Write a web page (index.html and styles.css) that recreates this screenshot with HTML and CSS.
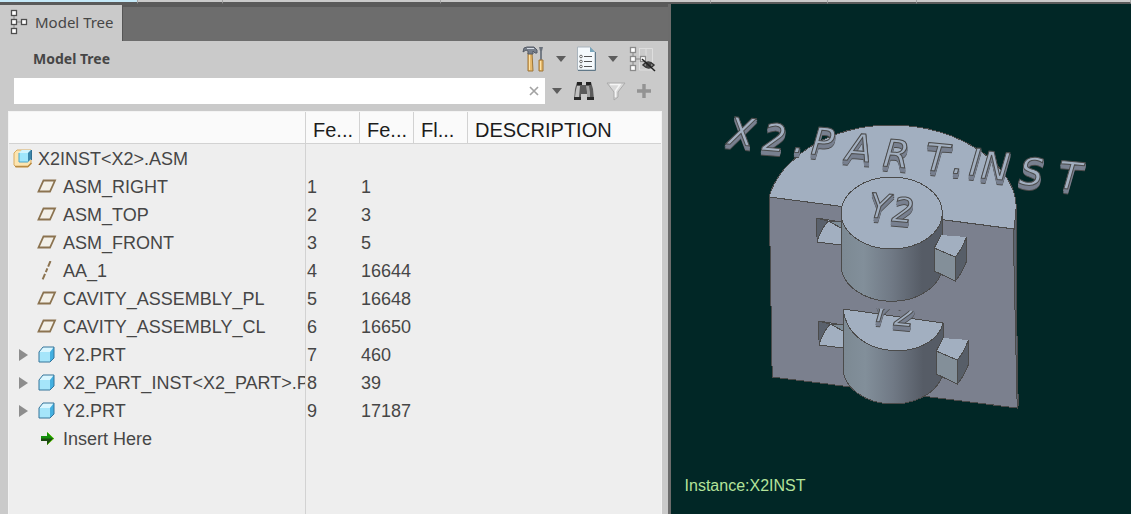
FILE: index.html
```
<!DOCTYPE html>
<html lang="en">
<head>
    <meta charset="UTF-8">
    <meta name="viewport" content="width=device-width, initial-scale=1.0">
    <title>Model Tree</title>
    <link rel="stylesheet" href="styles.css">
</head>
<body>
    <!-- shared icons -->
    <svg class="icon-defs" aria-hidden="true">
        <symbol id="plane" viewBox="0 0 20 20">
            <path d="M6.5 3.500H18L13 14.500H1.500Z" fill="#f3f0e8" stroke="#8b7350" stroke-width="1.800"/>
        </symbol>
        <symbol id="axis" viewBox="0 0 20 20">
            <path d="M13.500 0L5 20" fill="none" stroke="#8b7350" stroke-width="2" stroke-dasharray="6 2 4 2"/>
        </symbol>
        <symbol id="part" viewBox="0 0 20 20">
            <path d="M2 7L6 2H17V13L13 17H2Z" fill="#a5e5fa"/>
            <path d="M2 7L6 2H17L13 7Z" fill="#d9f6ff"/>
            <path d="M13 7L17 2V13L13 17Z" fill="#43afe0"/>
            <path d="M2 7L6 2H17V13L13 17H2Z" fill="none" stroke="#35749a"/>
        </symbol>
        <symbol id="asm" viewBox="0 0 20 20">
            <path d="M1 4L4 1H18V14L15 18H3L1 16Z" fill="#fde5b0" stroke="#d9ac61"/>
            <path d="M2 17.500H15L18.500 14" fill="none" stroke="#b98b43" stroke-width="1.500"/>
            <path d="M6 4L9 1H18V10L15 13H6Z" fill="#9fe6fb"/>
            <path d="M6 4L9 1H18L15 4Z" fill="#d2f4fd"/>
            <path d="M15 4L18 1V10L15 13Z" fill="#3b86aa"/>
            <path d="M6 4V13H15" fill="none" stroke="#4ba5c9"/>
            <path d="M18.500 1V11" stroke="#2f6f92"/>
        </symbol>
        <symbol id="insert" viewBox="0 0 20 20">
            <path d="M4 7H10V3L17 9.500L10 16V12H4Z" fill="#14900c"/>
            <path d="M4 9.500H17L10 16V12H4Z" fill="#1c4b12"/>
            <path d="M10.500 3.500L16.500 9.500L10.500 15.500" fill="none" stroke="#5cc40a"/>
        </symbol>
    </svg>

    <div class="ribbon">
        <span class="active"></span><span></span><span></span><span></span><span></span><span></span><span></span>
    </div>

    <div class="workspace">
        <div class="panel">
            <div class="tabs">
                <button class="tab">
                    <svg width="18" height="26" viewBox="0 0 18 26">
                        <path d="M4 4V22M4 13H13" stroke="#8a8a8a" stroke-width="1"/>
                        <g fill="#fff" stroke="#4d4d4d" stroke-width="1.300">
                            <rect x="1.500" y="1.500" width="5" height="5"/>
                            <rect x="1.500" y="10.500" width="5" height="5"/>
                            <rect x="1.500" y="19.500" width="5" height="5"/>
                            <rect x="11.500" y="10.500" width="5" height="5"/>
                        </g>
                    </svg>
                    Model Tree
                </button>
            </div>

            <div class="toolbar">
                <h1>Model Tree</h1>
                <div class="tools">
                    <button class="tool" aria-label="Settings">
                        <svg width="24" height="28" viewBox="0 0 24 28">
                            <path d="M6 8H10L11 26H6Z" fill="#e6b96c" stroke="#9f7535"/>
                            <path d="M7.500 9V25" stroke="#ffe2a5"/>
                            <path d="M2 3L5 2H12L15 5V8H13L11 6V9H6V6L4 5L1 7Z" fill="#777f8b" stroke="#555b66"/>
                            <path d="M5 3.500H12" stroke="#d7dde6"/>
                            <path d="M19 2V15" stroke="#747b84" stroke-width="2"/>
                            <path d="M17 2H21L20 6H18Z" fill="#6b727c"/>
                            <path d="M17 15H21V26H17Z" fill="#e6b96c" stroke="#9f7535"/>
                            <path d="M18.500 16V25" stroke="#ffe2a5"/>
                        </svg>
                    </button>
                    <button class="tool" aria-label="Settings menu"><svg class="caret" width="10" height="6" viewBox="0 0 10 6"><path d="M0 0H10L5 6Z"/></svg></button>
                    <button class="tool" aria-label="Show">
                        <svg width="22" height="28" viewBox="0 0 22 28">
                            <path d="M1.500 2H14L19 7V25H1.500Z" fill="#f4f9fc" stroke="#a9b4bd"/>
                            <path d="M2 25.500H19.500V7" fill="none" stroke="#607888"/>
                            <path d="M14 2V7H19Z" fill="#79a6bc"/>
                            <path d="M8 11.500H16M8 16.500H16M8 21.500H16" stroke="#555"/>
                            <g fill="#fff" stroke="#666"><circle cx="5" cy="11.500" r="1.300"/><circle cx="5" cy="16.500" r="1.300"/><circle cx="5" cy="21.500" r="1.300"/></g>
                        </svg>
                    </button>
                    <button class="tool" aria-label="Show menu"><svg class="caret" width="10" height="6" viewBox="0 0 10 6"><path d="M0 0H10L5 6Z"/></svg></button>
                    <button class="tool" aria-label="Hide columns">
                        <svg width="28" height="28" viewBox="0 0 28 28">
                            <path d="M11 3.500H24.500V25M11.500 3V25H24M18 3V24" fill="none" stroke="#dedede"/>
                            <path d="M5 5V23M5 14H14" stroke="#888"/>
                            <g fill="#fff" stroke="#8a8a8a" stroke-width="1.300">
                                <rect x="2.500" y="2.500" width="5" height="5"/>
                                <rect x="2.500" y="11.500" width="5" height="5"/>
                                <rect x="2.500" y="20.500" width="5" height="5"/>
                                <rect x="12.500" y="11.500" width="5" height="5"/>
                            </g>
                            <path d="M15 20Q20 14 26 20Q21 26 15 20Z" fill="#bbb" stroke="#333" stroke-width="1.500"/>
                            <circle cx="20.500" cy="20" r="3" fill="#444"/>
                            <path d="M14 14L27 26" stroke="#222" stroke-width="1.500"/>
                        </svg>
                    </button>
                </div>
            </div>

            <div class="search">
                <div class="field">
                    <input type="text" aria-label="Search the tree">
                    <button class="tool" aria-label="Clear">
                        <svg width="10" height="10" viewBox="0 0 10 10"><path d="M1 1L9 9M9 1L1 9" stroke="#a3a3a3" stroke-width="1.700"/></svg>
                    </button>
                </div>
                <div class="tools">
                    <button class="tool" aria-label="Search menu"><svg class="caret" width="10" height="6" viewBox="0 0 10 6"><path d="M0 0H10L5 6Z"/></svg></button>
                    <button class="tool" aria-label="Find">
                        <svg width="22" height="20" viewBox="0 0 22 20">
                            <path d="M4 1H9V4H13V1H18L20 8L21 19H14V13H8V19H1L2 8Z" fill="#5b5b5b"/>
                            <path d="M4 1H9V4H4ZM13 1H18V4H13Z" fill="#222"/>
                            <path d="M4 5H7L6 16H2L3 9Z" fill="#c0c0c0"/>
                            <path d="M13 5H16L17 11V16H14V11Z" fill="#a2a2a2"/>
                            <path d="M1 16H8V19H1ZM14 16H21V19H14Z" fill="#292929"/>
                        </svg>
                    </button>
                    <button class="tool" aria-label="Filter">
                        <svg width="20" height="20" viewBox="0 0 20 20">
                            <path d="M1 2H19L12 11V16L8 19V11Z" fill="#d9d9d9" stroke="#aaa"/>
                            <path d="M4 3.500H14L9.500 10V16" fill="none" stroke="#f5f5f5" stroke-width="1.500"/>
                        </svg>
                    </button>
                    <button class="tool" aria-label="Add">
                        <svg width="14" height="14" viewBox="0 0 14 14"><path d="M7 0V14M0 7H14" stroke="#939393" stroke-width="3.400"/></svg>
                    </button>
                </div>
            </div>

            <div class="tree">
                <table>
                    <thead>
                        <tr>
                            <th class="name" aria-label="Name"></th>
                            <th class="num">Fe...</th>
                            <th class="num">Fe...</th>
                            <th class="num">Fl...</th>
                            <th>DESCRIPTION</th>
                        </tr>
                    </thead>
                    <tbody>
                        <tr>
                            <td><div class="item root"><svg class="icon"><use href="#asm"/></svg>X2INST&lt;X2&gt;.ASM</div></td>
                            <td></td><td></td><td></td><td></td>
                        </tr>
                        <tr>
                            <td><div class="item"><svg class="icon"><use href="#plane"/></svg>ASM_RIGHT</div></td>
                            <td>1</td><td>1</td><td></td><td></td>
                        </tr>
                        <tr>
                            <td><div class="item"><svg class="icon"><use href="#plane"/></svg>ASM_TOP</div></td>
                            <td>2</td><td>3</td><td></td><td></td>
                        </tr>
                        <tr>
                            <td><div class="item"><svg class="icon"><use href="#plane"/></svg>ASM_FRONT</div></td>
                            <td>3</td><td>5</td><td></td><td></td>
                        </tr>
                        <tr>
                            <td><div class="item"><svg class="icon"><use href="#axis"/></svg>AA_1</div></td>
                            <td>4</td><td>16644</td><td></td><td></td>
                        </tr>
                        <tr>
                            <td><div class="item"><svg class="icon"><use href="#plane"/></svg>CAVITY_ASSEMBLY_PL</div></td>
                            <td>5</td><td>16648</td><td></td><td></td>
                        </tr>
                        <tr>
                            <td><div class="item"><svg class="icon"><use href="#plane"/></svg>CAVITY_ASSEMBLY_CL</div></td>
                            <td>6</td><td>16650</td><td></td><td></td>
                        </tr>
                        <tr>
                            <td><div class="item branch"><button class="expand" aria-label="Expand"></button><svg class="icon"><use href="#part"/></svg>Y2.PRT</div></td>
                            <td>7</td><td>460</td><td></td><td></td>
                        </tr>
                        <tr>
                            <td><div class="item branch"><button class="expand" aria-label="Expand"></button><svg class="icon"><use href="#part"/></svg>X2_PART_INST&lt;X2_PART&gt;.PRT</div></td>
                            <td>8</td><td>39</td><td></td><td></td>
                        </tr>
                        <tr>
                            <td><div class="item branch"><button class="expand" aria-label="Expand"></button><svg class="icon"><use href="#part"/></svg>Y2.PRT</div></td>
                            <td>9</td><td>17187</td><td></td><td></td>
                        </tr>
                        <tr class="last">
                            <td><div class="item"><svg class="icon"><use href="#insert"/></svg>Insert Here</div></td>
                            <td></td><td></td><td></td><td></td>
                        </tr>
                    </tbody>
                </table>
            </div>
        </div>

        <div class="viewport">
            <svg class="model" viewBox="671 4 460 510">
                <defs>
                    <linearGradient id="barrel">
                        <stop offset="0" stop-color="#7c8993"/>
                        <stop offset="0.220" stop-color="#828f9a"/>
                        <stop offset="0.500" stop-color="#707985"/>
                        <stop offset="0.800" stop-color="#565c66"/>
                        <stop offset="1" stop-color="#565c66"/>
                    </linearGradient>
                    <clipPath id="cut"><path d="M843 306L943 313V360H843Z"/></clipPath>
                    <!-- hole on the left and key block on the right of each boss -->
                    <g id="slot">
                        <path d="M816 218L841 222V245L817 242Z" fill="#a2afc0"/>
                        <path d="M816 218L828 221Q820 230 817 242Z" fill="#5a616c"/>
                        <path d="M828 221L841 222V228Z" fill="#7e8d98"/>
                        <path d="M841 222L816 218L817 242L841 245M817 242Q820 230 828 221L841 228" fill="none"/>
                    </g>
                    <g id="key">
                        <path d="M941 235L966 237Q963 248 955 257L934 248Z" fill="#a2afc0" stroke="none"/>
                        <path d="M934 248L955 257V281L934 271Z" fill="#838f99"/>
                        <path d="M955 257Q963 248 966 237V262Q962 273 955 281Z" fill="#575e68"/>
                        <path d="M941 235L934 248" fill="none"/>
                    </g>
                </defs>

                <g class="solid">
                    <path d="M1013 229L1016 207V290L1018 405L1017 408Z" fill="#5c646f"/>
                    <path d="M769 197L1013 229L1017 408L772 377Z" fill="#7b808e"/>
                    <path d="M769 197C771 187 781 170 791 162C812 140 850 125 890 125C935 125 966 141 983 153C1008 172 1016 192 1016 207L1014 229Z" fill="#a2afc0"/>

                    <use href="#slot"/>
                    <path d="M841 213V265A50 36 0 0 0 942 265V213Z" fill="url(#barrel)"/>
                    <ellipse cx="891.500" cy="213" rx="50.500" ry="36" fill="#a2afc0"/>
                    <use href="#key"/>

                    <use href="#slot" x="2" y="103"/>
                    <path d="M843 309V368A50 36 0 0 0 943 368V323Z" fill="url(#barrel)"/>
                    <path d="M843 309L943 323C933 362 849 362 843 309Z" fill="#a2afc0"/>
                    <use href="#key" x="2" y="103"/>
                </g>

                <text class="emboss" x="727 761 792 810 845 882 924 951 968 980 1018 1057" y="144 150 152 154 160 166 170 173 175 178 184 188" rotate="5">X2.PART.INST</text>
                <text class="emboss boss" x="868 891" y="217 221" rotate="5">Y2</text>
                <g clip-path="url(#cut)">
                    <text class="emboss boss" x="870 893" y="321 325" rotate="5">Y2</text>
                </g>
            </svg>
            <p class="instance">Instance:X2INST</p>
        </div>
    </div>
</body>
</html>
```
FILE: styles.css
```
* {
    box-sizing: border-box;
}
body {
    display: flex;
    flex-direction: column;
    height: 100vh;
    margin: 0;
    overflow: hidden;
    background-color: #5a5a5a;
    color: #464646;
    font-family: "Liberation Sans", Arial, sans-serif;
    font-size: 18px;
}
button {
    padding: 0;
    border: 0;
    background: none;
    color: inherit;
    cursor: pointer;
}
svg {
    display: block;
}
.icon-defs {
    display: none;
}

/* bottom edge of the ribbon groups */
.ribbon {
    display: grid;
    grid-template-columns: 138fr 85fr 218fr 270fr 117fr 89fr 214fr;
    flex: none;
    height: 4px;
}
.ribbon span {
    border-right: 1px solid #a5a5a5;
    border-bottom: 2px solid #5a5a5a;
    background-color: #cacaca;
}
.ribbon .active {
    background-color: #c5e9f8;
}

.workspace {
    display: grid;
    grid-template-columns: 67fr 46fr;
    flex: 1;
    min-height: 0;
}
.panel {
    display: flex;
    flex-direction: column;
    min-width: 0;
    min-height: 0;
    border-right: 3px solid #6c6c6c;
    background-color: #cacaca;
}
.tabs {
    display: flex;
    height: 37px;
    border-top: 1px solid #5a5a5a;
    background: linear-gradient(#5a5a5a 2px, #6d6d6d 2px);
}
.tab {
    display: flex;
    align-items: center;
    gap: 7px;
    padding: 0 8px 2px 10px;
    border-right: 1px solid #555;
    background-color: #cacaca;
    font-family: "Noto Sans", sans-serif;
    font-size: 15px;
}
.toolbar {
    display: flex;
    align-items: center;
    justify-content: space-between;
    height: 37px;
    padding: 0 12px 2px 33px;
}
h1 {
    margin: 0;
    font-family: "Noto Sans", sans-serif;
    font-size: 14px;
    font-weight: 700;
}
.tools {
    display: flex;
    align-items: center;
    gap: 10px;
}
.caret {
    fill: #5d5d5d;
}
.search {
    display: flex;
    align-items: center;
    gap: 7px;
    padding: 0 17px 0 14px;
}
.search .tools {
    gap: 11px;
}
.field {
    display: flex;
    flex: 1;
    align-items: center;
    height: 26px;
    padding-right: 6px;
    background-color: #fff;
}
.field input {
    flex: 1;
    min-width: 0;
    border: 0;
    outline: 0;
    font-size: 15px;
}

.tree {
    flex: 1;
    min-height: 0;
    margin: 7px 6px 0 8px;
    border: 1px solid #f3f3f3;
    border-bottom: 0;
    background-color: #eee;
}
table {
    width: 100%;
    height: 100%;
    border-collapse: separate;
    border-spacing: 0;
    table-layout: fixed;
}
th {
    height: 32px;
    padding: 4px 0 0 7px;
    border-right: 1px solid #d2d2d2;
    border-bottom: 1px solid #d2d2d2;
    background-color: #fafafa;
    color: #1c1c1c;
    font-size: 20px;
    font-weight: 400;
    line-height: 24px;
    text-align: left;
}
th:last-child {
    border-right: 0;
}
.name {
    width: 297px;
}
.num {
    width: 54px;
}
td {
    height: 28px;
    padding: 2px 1px 0;
    line-height: 26px;
    white-space: nowrap;
}
td:first-child {
    padding: 2px 0 0;
    border-right: 1px solid #d2d2d2;
}
.last td {
    height: auto;
    vertical-align: top;
}
.item {
    display: flex;
    align-items: center;
    gap: 6px;
    height: 26px;
    padding-left: 28px;
    overflow: hidden;
}
.root {
    gap: 5px;
    padding-left: 4px;
}
.branch {
    padding-left: 10px;
}
.icon {
    flex: none;
    width: 20px;
    height: 20px;
}
.expand {
    flex: none;
    width: 12px;
    height: 12px;
    border-top: 6px solid transparent;
    border-bottom: 6px solid transparent;
    border-left: 9px solid #8d8d8d;
}

.viewport {
    position: relative;
    min-width: 0;
    min-height: 0;
    background-color: #012726;
}
.model {
    width: 100%;
    height: 100%;
}
.solid {
    stroke: #4b4b4b;
    stroke-width: 1;
    shape-rendering: crispEdges;
}
.emboss {
    fill: #a2afc0;
    stroke: #4b4b4b;
    stroke-width: 1;
    font-family: "DejaVu Sans", sans-serif;
    font-size: 38px;
    font-style: oblique;
    filter: drop-shadow(0 2px 0 #788090) drop-shadow(0 2px 0 #788090) drop-shadow(0 1px 0 #4b4b4b);
}
.boss {
    font-size: 34px;
}
.instance {
    position: absolute;
    bottom: 18px;
    left: 14px;
    margin: 0;
    color: #b4e39a;
    font-size: 16px;
    line-height: 20px;
}
```
